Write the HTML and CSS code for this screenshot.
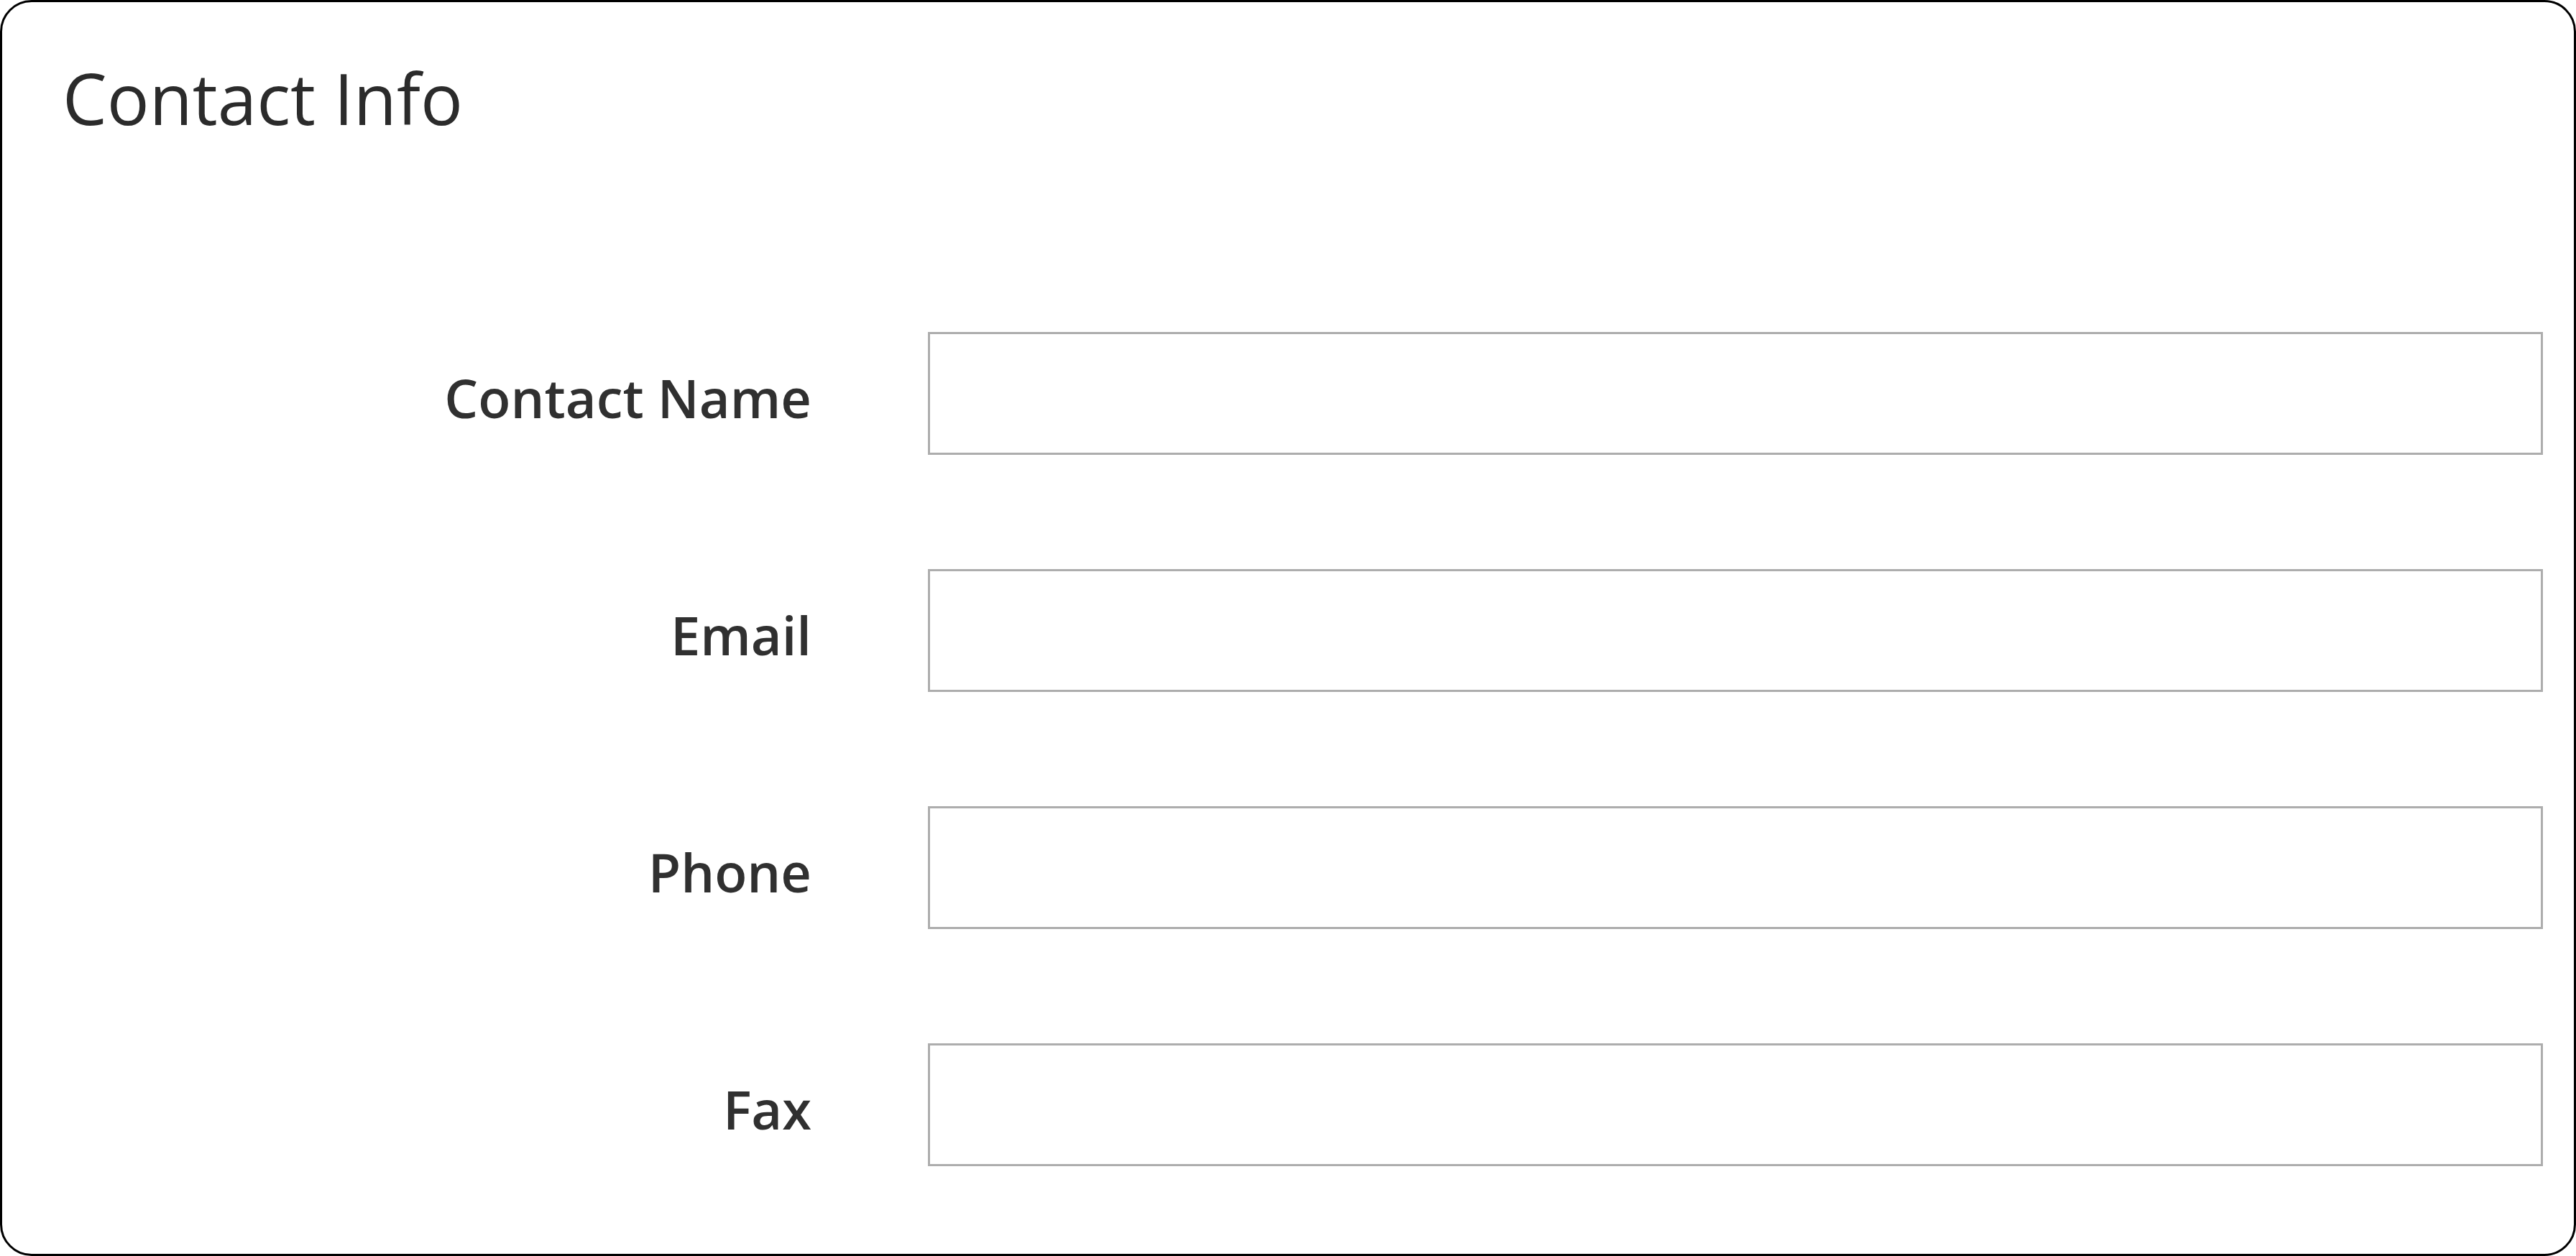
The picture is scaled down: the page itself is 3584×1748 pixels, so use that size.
FILE: index.html
```html
<!DOCTYPE html>
<html>
<head>
<meta charset="utf-8">
<link rel="stylesheet" href="styles.css">
</head>
<body>
<section class="card">
  <h1 class="title">Contact Info</h1>
  <div class="fields">
    <label class="label" for="f-name">Contact Name</label>
    <input class="input" id="f-name" type="text">
    <label class="label" for="f-email">Email</label>
    <input class="input" id="f-email" type="text">
    <label class="label" for="f-phone">Phone</label>
    <input class="input" id="f-phone" type="text">
    <label class="label" for="f-fax">Fax</label>
    <input class="input" id="f-fax" type="text">
  </div>
</section>
</body>
</html>
```

FILE: styles.css
```css
html, body {
  margin: 0;
  padding: 0;
  background: #ffffff;
}

.card {
  box-sizing: border-box;
  width: 3584px;
  height: 1748px;
  border: 3px solid #000000;
  border-radius: 44px;
  padding: 74px 43px 0 84px;
  font-family: "Open Sans", "Noto Sans", sans-serif;
  color: #303030;
  background: #ffffff;
}

.title {
  margin: 0;
  font-size: 98px;
  font-weight: 400;
  line-height: 118px;
  color: #2b2b2b;
}

.fields {
  display: grid;
  grid-template-columns: 1042px 1fr;
  column-gap: 162px;
  row-gap: 159px;
  margin-top: 267px;
}

.label {
  box-sizing: border-box;
  height: 171px;
  padding-top: 12px;
  line-height: 159px;
  text-align: right;
  font-size: 74px;
  font-weight: 600;
  color: #303030;
}

.input {
  box-sizing: border-box;
  height: 171px;
  width: 100%;
  margin: 0;
  border: 3px solid #adadad;
  border-radius: 0;
  background: #ffffff;
  outline: none;
}
```
